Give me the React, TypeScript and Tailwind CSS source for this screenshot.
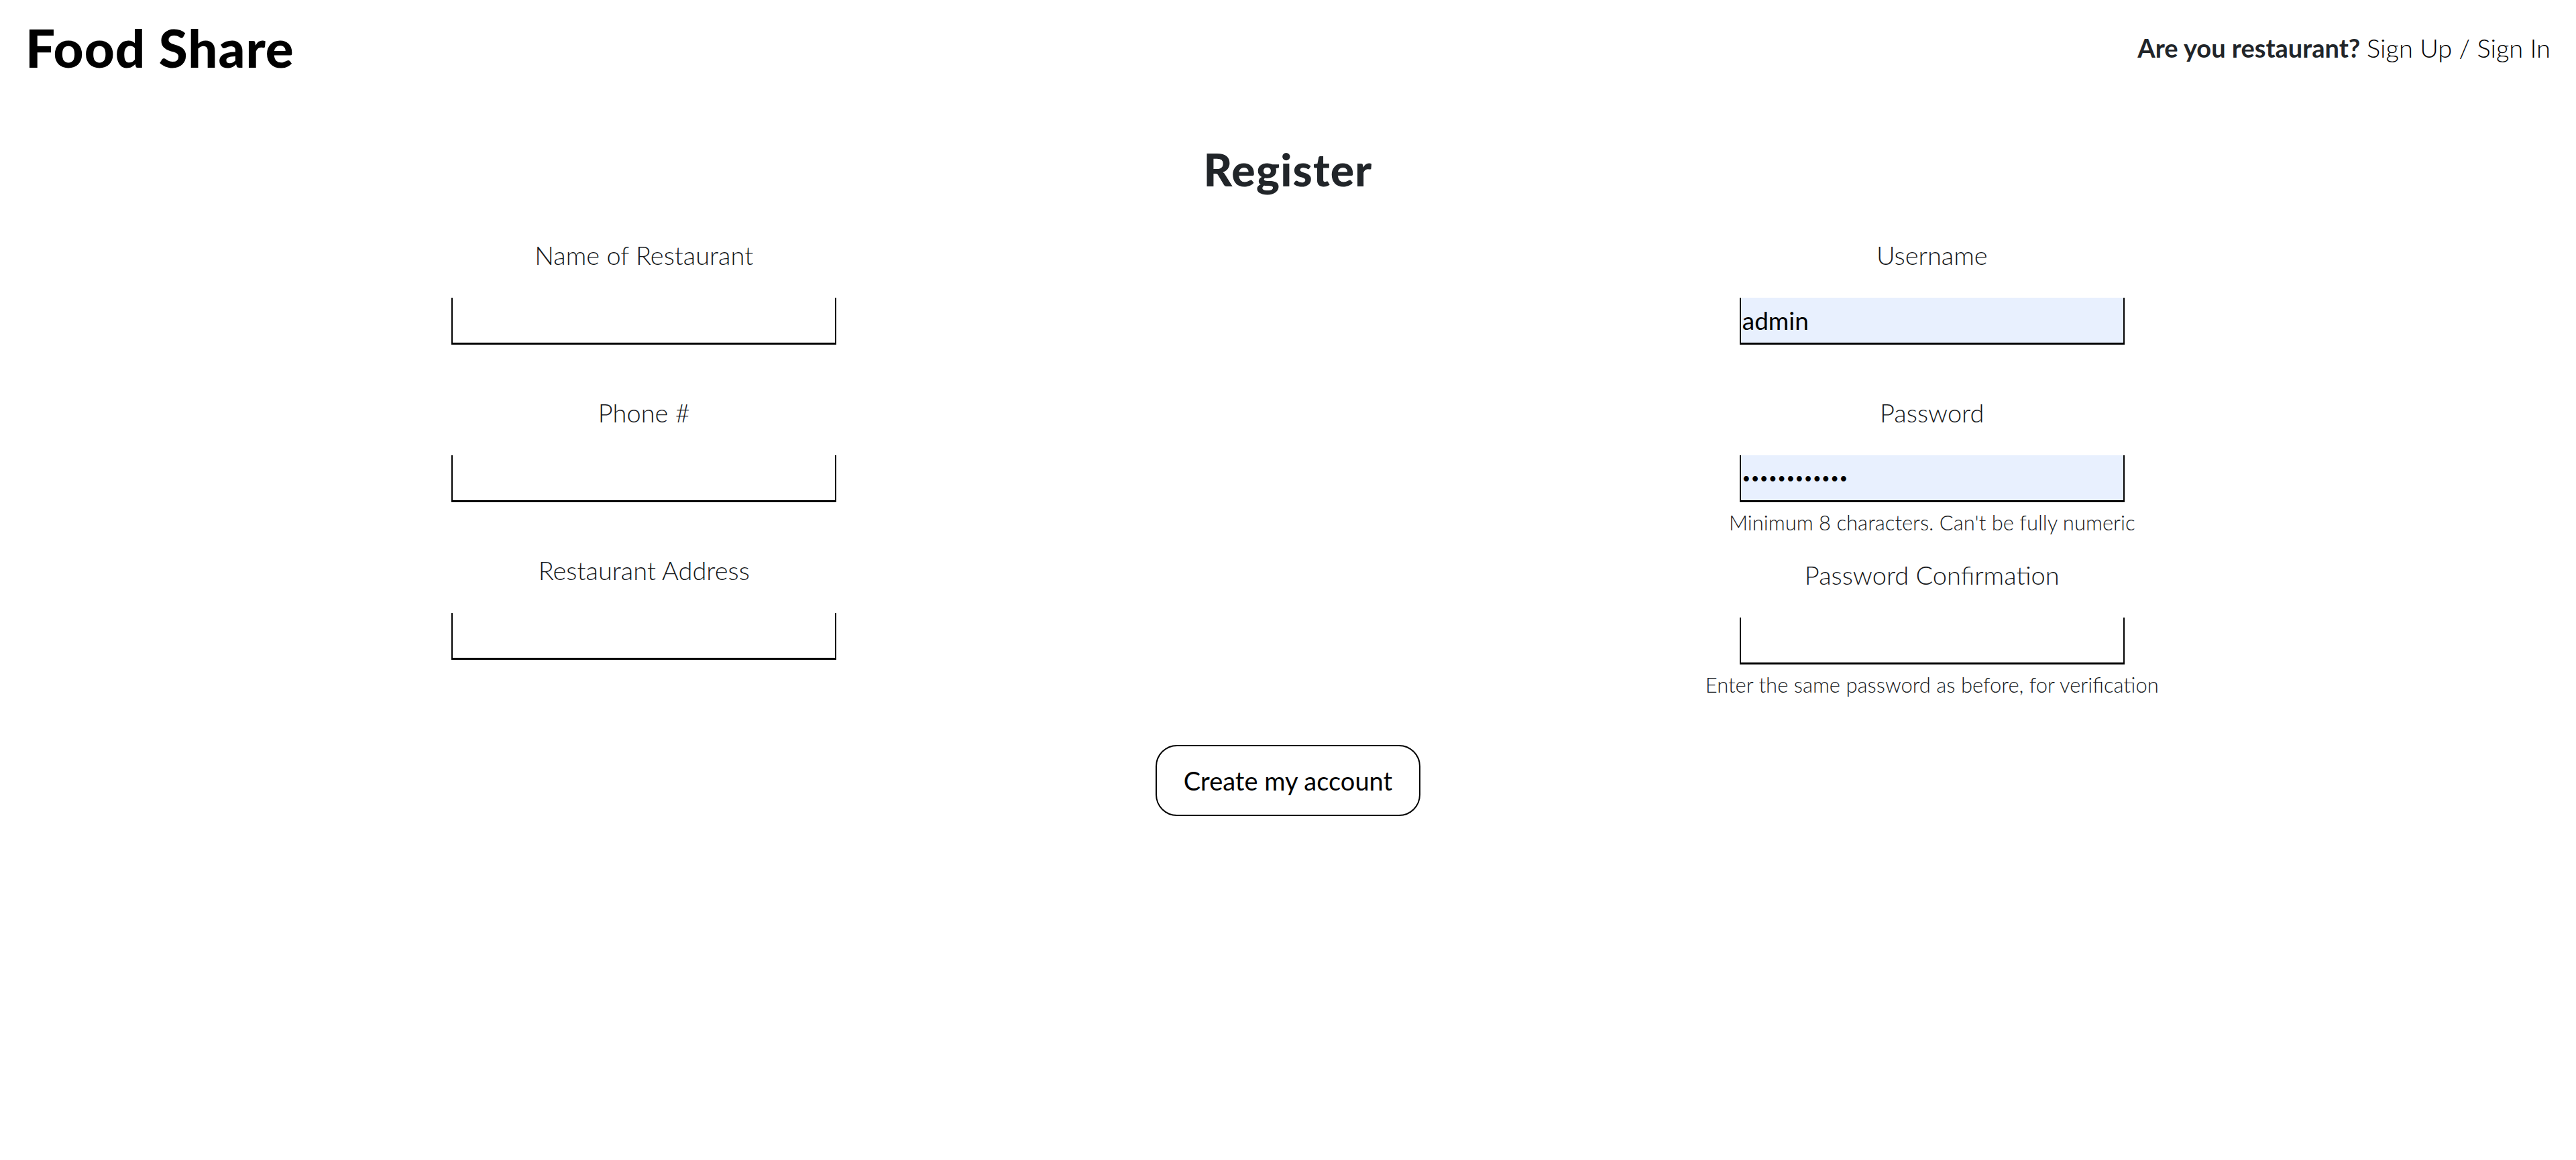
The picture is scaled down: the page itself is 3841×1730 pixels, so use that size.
import React from "react"

type Field = {
  label: string
  type?: string
  value?: string
  filled?: boolean
  help?: string
}

const restaurantFields: Field[] = [
  { label: "Name of Restaurant" },
  { label: "Phone #" },
  { label: "Restaurant Address" },
]

function FormField({ field }: { field: Field }) {
  const isPassword = field.type === "password"
  return (
    <div className="flex flex-col items-center">
      <label className="block h-[58px] text-[38px] font-light leading-[58px] text-[#15181b]">
        {field.label}
      </label>
      <input
        type={field.type || "text"}
        defaultValue={field.value}
        readOnly
        className={`mt-[35px] box-border h-[70px] w-[574px] border-x-2 border-t-0 border-b-[3px] border-solid border-black px-[2px] font-normal text-black outline-none ${
          isPassword ? "text-[21px] tracking-[1px]" : "text-[37px]"
        } ${field.filled ? "bg-[#e8f0fe]" : "bg-white"}`}
      />
      {field.help && (
        <small className="mt-[10px] block h-[40px] text-[31px] font-light leading-[40px] text-[#15181b]">
          {field.help}
        </small>
      )}
    </div>
  )
}

export default function App() {
  return (
    <div className="min-h-[1730px] w-full bg-white font-['Lato','Noto_Sans',sans-serif] text-[#212529]">
      <header className="flex h-[142px] items-center justify-between px-[38px]">
        <h1 className="text-[78px] font-black leading-none tracking-[1px] text-black">Food Share</h1>
        <div className="text-[38px] leading-none">
          <span className="font-bold text-[#212529]">Are you restaurant?</span>{" "}
          <a href="#" className="font-light text-black">
            Sign Up
          </a>
          <span className="font-light text-black"> / </span>
          <a href="#" className="font-light text-black">
            Sign In
          </a>
        </div>
      </header>

      <main>
        <h2 className="mt-[72px] text-center text-[66px] font-black leading-[77px] tracking-[1.2px] text-[#212529]">
          Register
        </h2>

        <div className="mt-[60px] grid grid-cols-2">
          <div className="flex flex-col gap-[72px]">
            {restaurantFields.map((f) => (
              <FormField key={f.label} field={f} />
            ))}
          </div>

          <div className="flex flex-col">
            <FormField field={{ label: "Username", value: "admin", filled: true }} />
            <div className="mt-[72px]">
              <FormField
                field={{
                  label: "Password",
                  type: "password",
                  value: "adminpass123",
                  filled: true,
                  help: "Minimum 8 characters. Can't be fully numeric",
                }}
              />
            </div>
            <div className="mt-[29px]">
              <FormField
                field={{
                  label: "Password Confirmation",
                  type: "password",
                  help: "Enter the same password as before, for verification",
                }}
              />
            </div>
          </div>
        </div>

        <div className="mt-[70px] flex justify-center">
          <button className="h-[106px] w-[395px] rounded-[32px] border-2 border-black bg-white text-[38px] font-normal text-black">
            Create my account
          </button>
        </div>
      </main>
    </div>
  )
}
